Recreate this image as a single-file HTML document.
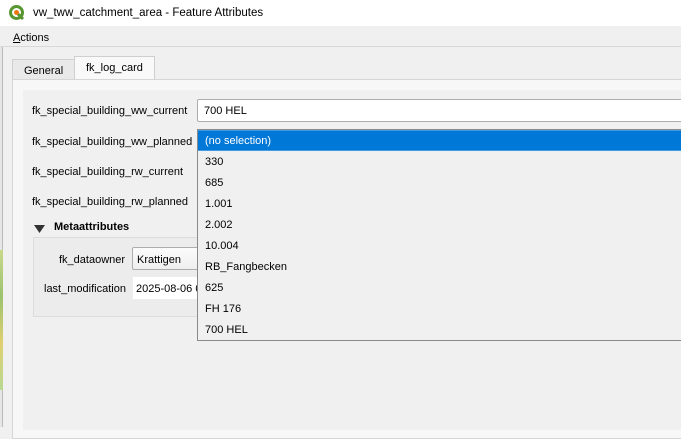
<!DOCTYPE html>
<html><head><style>
*{margin:0;padding:0;box-sizing:border-box}
body{width:681px;height:427px;background:#f0f0f0;font-family:"Liberation Sans",sans-serif;font-size:11px;color:#000;position:relative;overflow:hidden}
.a{position:absolute}
.lbl{position:absolute;white-space:nowrap}
.dd div{height:21px;line-height:22px;padding-left:7px}
</style></head><body>
<div class="a" style="left:0;top:0;width:681px;height:26px;background:#fff"></div>
<svg class="a" style="left:9px;top:5px" width="16" height="16" viewBox="0 0 16 16"><circle cx="7.5" cy="7.5" r="6" fill="none" stroke="#589632" stroke-width="3"/><path d="M9 9 L14 14" stroke="#589632" stroke-width="3"/><circle cx="7.5" cy="7.5" r="2.5" fill="#ee7913"/></svg>
<div class="lbl" style="left:33px;top:7px;font-size:11.5px">vw_tww_catchment_area - Feature Attributes</div>
<div class="lbl" style="left:13px;top:32px"><u>A</u>ctions</div>
<div class="a" style="left:0;top:46px;width:681px;height:1px;background:#d8d8d8"></div>
<div class="a" style="left:0;top:47px;width:3px;height:380px;background:#e6e6e6;border-right:1px solid #bbb"></div>
<div class="a" style="left:0;top:250px;width:3px;height:140px;background:linear-gradient(#c9d88a,#9cc26e,#e0d070,#b8d890)"></div>
<div class="a" style="left:12px;top:59px;width:63px;height:21px;border:1px solid #d0d0d0;border-bottom:none;background:#e9e9e9"></div>
<div class="lbl" style="left:24px;top:65px">General</div>
<div class="a" style="left:74px;top:56px;width:81px;height:24px;border:1px solid #cfcfcf;border-bottom:none;background:#f9f9f9"></div>
<div class="lbl" style="left:86px;top:62px">fk_log_card</div>
<div class="a" style="left:12px;top:79px;width:680px;height:360px;border:1px solid #d6d6d6;background:#f7f7f7"></div>
<div class="a" style="left:23px;top:90px;width:670px;height:340px;background:#f0f0f0"></div>
<div class="lbl" style="left:32px;top:105px">fk_special_building_ww_current</div>
<div class="lbl" style="left:32px;top:136px">fk_special_building_ww_planned</div>
<div class="lbl" style="left:32px;top:166px">fk_special_building_rw_current</div>
<div class="lbl" style="left:32px;top:196px">fk_special_building_rw_planned</div>
<div class="a" style="left:197px;top:99px;width:490px;height:23px;border:1px solid #adadad;border-radius:2px;background:#fff"></div>
<div class="lbl" style="left:204px;top:105px">700 HEL</div>
<div class="a" style="left:197px;top:159px;width:490px;height:23px;border:1px solid #adadad;background:linear-gradient(#fafafa,#ececec)"></div>
<svg class="a" style="left:34px;top:224px" width="12" height="10"><path d="M0 1 L11 1 L5.5 9Z" fill="#333"/></svg>
<div class="lbl" style="left:54px;top:221px;font-weight:bold">Metaattributes</div>
<div class="a" style="left:33px;top:237px;width:200px;height:80px;border:1px solid #dcdcdc;border-right:none;background:#ececec"></div>
<div class="lbl" style="left:59px;top:254px">fk_dataowner</div>
<div class="a" style="left:132px;top:247px;width:80px;height:23px;border:1px solid #adadad;border-radius:2px;background:linear-gradient(#fbfbfb,#efefef)"></div>
<div class="lbl" style="left:137px;top:254px">Krattigen</div>
<div class="lbl" style="left:44px;top:283px">last_modification</div>
<div class="a" style="left:133px;top:277px;width:70px;height:22px;background:#fff"></div>
<div class="lbl" style="left:136px;top:283px">2025-08-06 0</div>
<div class="a dd" style="left:197px;top:129px;width:490px;height:212px;border:1px solid #8a8a8a;background:#f0f0f0">
<div style="background:#0078d7;color:#fff;height:21px;border-top:1px solid #3f9be6;border-bottom:1px solid #3f9be6;line-height:20px">(no selection)</div>
<div>330</div><div>685</div><div>1.001</div><div>2.002</div><div>10.004</div><div>RB_Fangbecken</div><div>625</div><div>FH 176</div><div>700 HEL</div>
</div>
</body></html>
